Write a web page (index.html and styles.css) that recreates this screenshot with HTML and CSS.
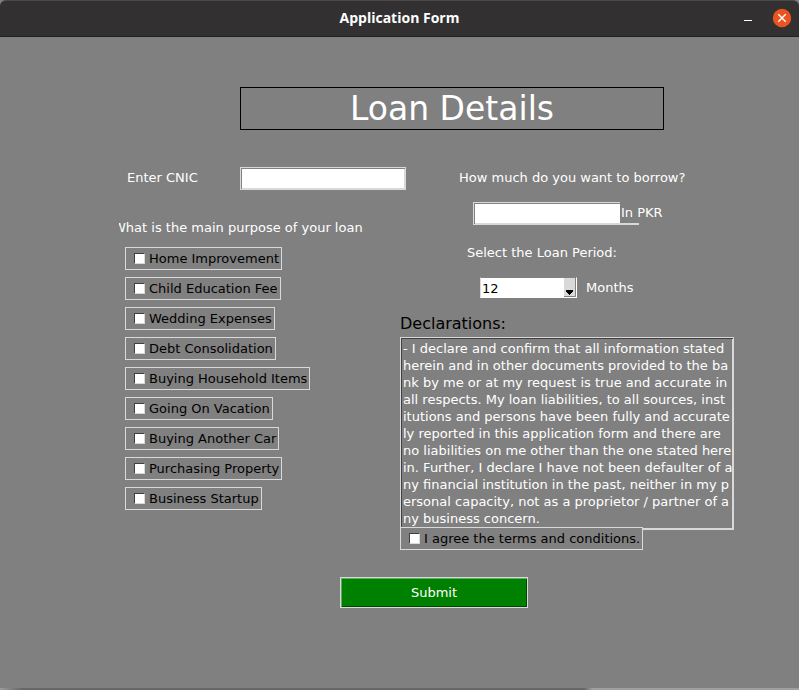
FILE: index.html
```html
<!DOCTYPE html>
<html lang="en">
<head>
<meta charset="utf-8">
<title>Application Form</title>
<link rel="stylesheet" href="styles.css">
</head>
<body>
<div class="window">
  <header class="titlebar">
    <span class="titlebar-text">Application Form</span>
    <div class="titlebar-buttons">
      <button class="minimize" type="button" aria-label="Minimize"></button>
      <button class="close" type="button" aria-label="Close">
        <svg width="20" height="20" viewBox="0 0 20 20"><circle cx="10" cy="10" r="9.2" fill="#e95420"/><path d="M6.3 6.3l7.4 7.4M13.7 6.3l-7.4 7.4" stroke="#fff" stroke-width="1.4" fill="none"/></svg>
      </button>
    </div>
  </header>
  <form class="form">
    <h1 class="heading">Loan Details</h1>
    <div class="columns">
      <div class="left">
        <div class="cnic-row">
          <label for="cnic">Enter CNIC</label>
          <input class="entry" id="cnic" type="text">
        </div>
        <fieldset class="purposes">
          <legend class="purpose-title"><span>What is the main purpose of your loan</span></legend>
          <label class="check"><input type="checkbox">Home Improvement</label>
          <label class="check"><input type="checkbox">Child Education Fee</label>
          <label class="check"><input type="checkbox">Wedding Expenses</label>
          <label class="check"><input type="checkbox">Debt Consolidation</label>
          <label class="check"><input type="checkbox">Buying Household Items</label>
          <label class="check"><input type="checkbox">Going On Vacation</label>
          <label class="check"><input type="checkbox">Buying Another Car</label>
          <label class="check"><input type="checkbox">Purchasing Property</label>
          <label class="check"><input type="checkbox">Business Startup</label>
        </fieldset>
      </div>
      <div class="right">
        <label class="amount-label" for="amount">How much do you want to borrow?</label>
        <div class="amount-row">
          <input class="entry" id="amount" type="text">
          <span class="currency">In PKR</span>
        </div>
        <label class="period-label" for="period">Select the Loan Period:</label>
        <div class="period-row">
          <span class="combo">
            <select id="period"><option>12</option><option>24</option><option>36</option></select>
            <svg class="combo-arrow" width="12" height="19" viewBox="0 0 12 19" aria-hidden="true"><path d="M0 0h12v19H0z" fill="#d9d9d9"/><path d="M11.5 0v18.5H0" stroke="#828282" fill="none"/><path d="M2 12h7v2H8v1H7v1H6v1H5v-1H4v-1H3v-1H2z" fill="#000"/></svg>
          </span>
          <span>Months</span>
        </div>
        <label class="declare-label" for="declarations">Declarations:</label>
        <textarea class="declarations" id="declarations" rows="11" readonly>- I declare and confirm that all information stated
herein and in other documents provided to the ba
nk by me or at my request is true and accurate in
all respects. My loan liabilities, to all sources, inst
itutions and persons have been fully and accurate
ly reported in this application form and there are
no liabilities on me other than the one stated here
in. Further, I declare I have not been defaulter of a
ny financial institution in the past, neither in my p
ersonal capacity, not as a proprietor / partner of a
ny business concern.</textarea>
        <label class="check agree"><input type="checkbox">I agree the terms and conditions.</label>
      </div>
    </div>
    <button class="submit" type="submit">Submit</button>
  </form>
</div>
</body>
</html>
```

FILE: styles.css
```css
* {
  box-sizing: border-box;
}

body {
  margin: 0;
  background: #e6e6e6;
  color: #fff;
  font: 13px/22px "DejaVu Sans", sans-serif;
}

input,
select,
textarea,
button {
  font: inherit;
  border-radius: 0;
}

.window {
  display: flex;
  flex-direction: column;
  min-height: 100vh;
  background: #808080;
  border-bottom: 2px solid #706e6e;
  border-image: linear-gradient(90deg, #a0a0a0, #686666 3%, #686666 73%, #a09e9e 74%, #a09e9e) 2;
  border-style: none none solid;
}

.titlebar {
  display: grid;
  grid-template-columns: 1fr auto 1fr;
  align-items: center;
  height: 37px;
  padding: 0 7px 1px;
  background: #323030;
  border-top: 1px solid #4b4949;
  border-bottom: 1px solid #222121;
  border-radius: 6px 6px 0 0;
}

.titlebar-text {
  grid-column: 2;
  font: bold 14px/20px "Open Sans", sans-serif;
}

.titlebar-buttons {
  display: flex;
  justify-content: flex-end;
  gap: 20px;
}

.titlebar-buttons button {
  padding: 0;
  border: 0;
  background: none;
}

.minimize::before {
  content: "";
  display: block;
  width: 8px;
  height: 1px;
  margin-top: 4px;
  background: #fff;
}

.close svg {
  display: block;
}

.form {
  flex: 1;
}

.heading {
  margin: 50px 135px 37px 240px;
  border: 1px solid #000;
  font-size: 33px;
  font-weight: 400;
  line-height: 41px;
  text-align: center;
}

.columns {
  display: grid;
  grid-template-columns: 282px 1fr;
  padding: 0 65px 0 118px;
}

.cnic-row {
  display: flex;
  justify-content: space-between;
  width: 288px;
  padding-left: 9px;
}

.entry {
  width: 166px;
  height: 23px;
  padding: 0 4px;
  border: 1px solid #d9d9d9;
  background: #fff;
  box-shadow: inset 1px 1px #828282, inset -1px -1px #d9d9d9;
}

.purposes {
  display: flex;
  flex-direction: column;
  align-items: flex-start;
  gap: 7px;
  min-width: 0;
  margin: 27px 0 0;
  padding: 8px 0 0 7px;
  border: 0;
}

.purpose-title {
  margin-left: -6px;
  padding: 0;
  overflow: hidden;
}

.purpose-title span {
  display: block;
  margin-left: -6px;
}

.check {
  display: inline-flex;
  align-items: center;
  gap: 4px;
  height: 23px;
  padding: 0 2px 0 8px;
  border: 1px solid #d9d9d9;
  background: #808080;
  color: #000;
}

.check input {
  appearance: none;
  width: 11px;
  height: 11px;
  margin: 0;
  border: 1px solid;
  border-color: #404040 #d9d9d9 #d9d9d9 #404040;
  background: #fff;
}

.right {
  display: flex;
  flex-direction: column;
  align-items: flex-start;
}

.amount-label {
  margin-left: 59px;
}

.amount-row {
  display: flex;
  margin: 13px 0 17px 73px;
}

.currency {
  height: 21px;
  margin-left: -19px;
  padding-left: 1px;
  background: #808080;
  position: relative;
}

.period-label {
  margin-left: 67px;
}

.period-row {
  display: flex;
  gap: 9px;
  margin: 13px 0 14px 80px;
}

.combo {
  position: relative;
  width: 97px;
  height: 21px;
}

.combo select {
  appearance: none;
  display: block;
  width: 100%;
  height: 100%;
  padding: 0 14px 0 1px;
  border: 1px solid;
  border-color: #828282 #fff #fff #d9d9d9;
  background: #fff;
  color: #000;
}

.combo-arrow {
  position: absolute;
  top: 1px;
  right: 1px;
  pointer-events: none;
}

.declare-label {
  margin-bottom: 2px;
  color: #000;
  font-size: 16px;
}

.declarations {
  width: 100%;
  height: 193px;
  padding: 2px;
  border: 1px solid #d9d9d9;
  outline: 0;
  background: #808080;
  box-shadow: inset 1px 1px #404040, inset -1px -1px #d9d9d9;
  color: #fff;
  line-height: 17px;
  resize: none;
  overflow: hidden;
  white-space: pre;
}

.agree {
  margin-top: -3px;
  position: relative;
}

.submit {
  display: block;
  width: 188px;
  height: 31px;
  margin: 27px 0 0 340px;
  border: 1px solid #d9d9d9;
  background: #008000;
  box-shadow: inset 1px 1px #5fae5f, inset -1px -1px #004800;
  color: #fff;
}
```
